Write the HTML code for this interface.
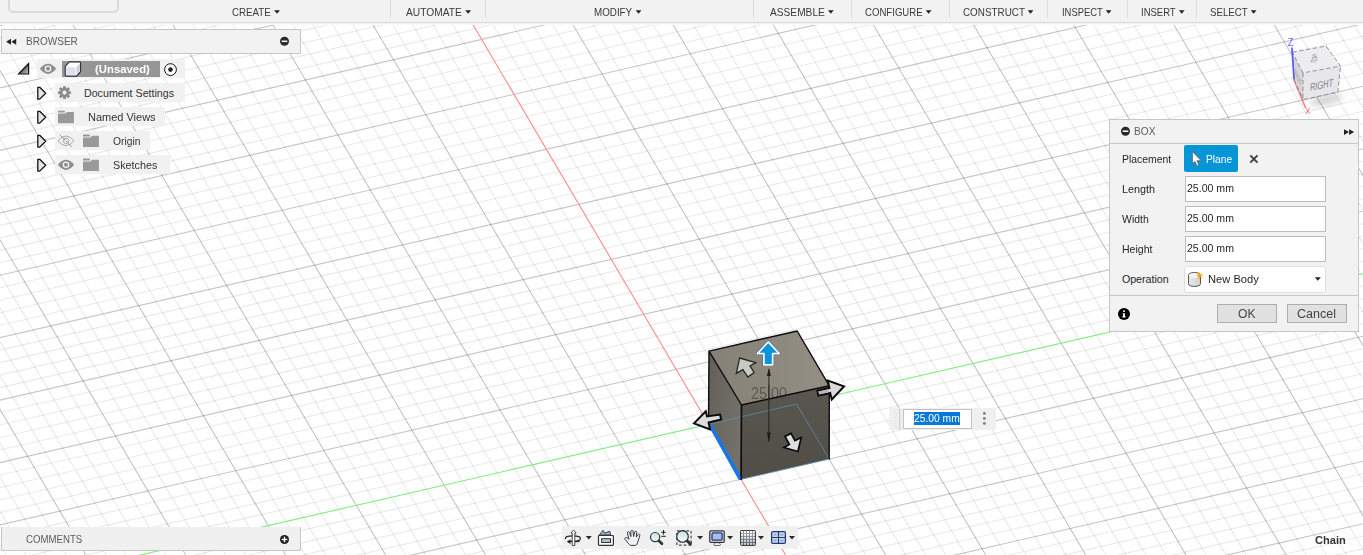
<!DOCTYPE html>
<html lang="en"><head><meta charset="utf-8"><title>Fusion - Box</title>
<style>
html,body{margin:0;padding:0}
body{width:1363px;height:555px;overflow:hidden;position:relative;background:#fff;font-family:"Liberation Sans",sans-serif}
.t{position:absolute;white-space:nowrap;line-height:1;transform-origin:0 0;display:block}
svg{position:absolute;overflow:visible}
#canvas{left:0;top:0}
.ov{left:0;top:0;pointer-events:none}
svg text{font-family:"Liberation Sans",sans-serif}
#toolbar{position:absolute;left:0;top:0;width:1363px;height:22px;background:#f2f2f2;border-bottom:1px solid #dcdcdc;box-shadow:0 1px 0 #f3f3f3,0 2px 0 #fafafa}
#tabbox{position:absolute;left:8px;top:-8.5px;width:107px;height:17px;border:2px solid #dadada;border-radius:5px}
.dd{position:absolute;width:0;height:0;border-left:2.9px solid transparent;border-right:2.9px solid transparent;border-top:3.4px solid #222}
.sep{position:absolute;top:0;width:1px;height:18px;background:#dedede}
.panel{position:absolute;box-sizing:border-box;background:#f2f2f2;border:1px solid #c6c6c6}
.row{position:absolute;background:#f1f1f1;height:19.3px}
#sel{position:absolute;left:62px;top:61px;width:98px;height:16px;background:#969696}
#dialog{position:absolute;left:1109px;top:119px;width:250px;height:213px;box-sizing:border-box;background:#f2f2f2;border:1px solid #c6c6c6}
.hr{position:absolute;left:0;width:248px;height:1px;background:#c8c8c8}
.inp{position:absolute;left:1185px;width:141px;height:26px;box-sizing:border-box;background:#fff;border:1px solid #bcbcbc}
.btn{position:absolute;top:304px;width:60px;height:19px;box-sizing:border-box;background:#e1e1e1;border:1px solid #adadad}
#plane{position:absolute;left:1184.2px;top:145.3px;width:54.2px;height:27.2px;background:#0696d7;border-radius:2px}
#ddl{position:absolute;left:1184px;top:265.5px;width:142px;height:27px;box-sizing:border-box;background:#fff;border:1px solid #e0e0e0;border-radius:3px}
#fin{position:absolute;left:889px;top:408px;width:107px;height:22px;background:#f0f0f0}
#fin .box{position:absolute;left:14px;top:1px;width:69px;height:20px;box-sizing:border-box;background:#fff;border:1px solid #c2c2c2}
#fin .hl{position:absolute;left:25px;top:4px;width:46px;height:13px;background:#0a78d7}
#nav{position:absolute;left:562px;top:526px;width:236px;height:23px;background:#f0f0f0}
</style></head><body>
<svg id="canvas" width="1363" height="555" viewBox="0 0 1363 555">
<g id="gridlines">
<path d="M-2.0 541.6L7.1 557.0M-2.0 507.7L27.1 557.0M-2.0 473.8L47.0 557.0M-2.0 440.0L67.0 557.0M-2.0 372.2L107.0 557.0M-2.0 338.3L126.9 557.0M-2.0 304.4L146.9 557.0M-2.0 270.5L166.9 557.0M-2.0 202.7L206.9 557.0M-2.0 168.8L226.9 557.0M-2.0 135.0L246.8 557.0M-2.0 101.1L266.8 557.0M-2.0 33.3L306.8 557.0M10.2 20.0L326.8 557.0M30.2 20.0L346.8 557.0M50.2 20.0L366.8 557.0M90.1 20.0L406.8 557.0M110.1 20.0L426.8 557.0M130.1 20.0L446.7 557.0M150.1 20.0L466.7 557.0M190.1 20.0L506.7 557.0M210.1 20.0L526.7 557.0M230.1 20.0L546.7 557.0M250.1 20.0L566.7 557.0M290.1 20.0L606.7 557.0M310.1 20.0L626.7 557.0M330.1 20.0L646.7 557.0M350.1 20.0L666.7 557.0M390.1 20.0L706.8 557.0M410.1 20.0L726.8 557.0M430.1 20.0L746.8 557.0M450.2 20.0L766.8 557.0M490.2 20.0L806.8 557.0M510.2 20.0L826.8 557.0M530.2 20.0L846.8 557.0M550.2 20.0L866.8 557.0M590.2 20.0L906.9 557.0M610.3 20.0L926.9 557.0M630.3 20.0L946.9 557.0M650.3 20.0L966.9 557.0M690.3 20.0L1006.9 557.0M710.3 20.0L1027.0 557.0M730.4 20.0L1047.0 557.0M750.4 20.0L1067.0 557.0M790.4 20.0L1107.1 557.0M810.5 20.0L1127.1 557.0M830.5 20.0L1147.1 557.0M850.5 20.0L1167.1 557.0M890.6 20.0L1207.2 557.0M910.6 20.0L1227.2 557.0M930.6 20.0L1247.2 557.0M950.7 20.0L1267.3 557.0M990.7 20.0L1307.3 557.0M1010.7 20.0L1327.4 557.0M1030.8 20.0L1347.4 557.0M1050.8 20.0L1365.0 552.9M1090.9 20.0L1365.0 484.9M1110.9 20.0L1365.0 450.9M1131.0 20.0L1365.0 416.9M1151.0 20.0L1365.0 382.9M1191.1 20.0L1365.0 315.0M1211.1 20.0L1365.0 281.0M1231.2 20.0L1365.0 247.0M1251.2 20.0L1365.0 213.0M1291.3 20.0L1365.0 145.0M1311.3 20.0L1365.0 111.0M1331.4 20.0L1365.0 77.0M1351.4 20.0L1365.0 43.0" stroke="#000" stroke-opacity="0.085" stroke-width="1.1" fill="none"/>
<path d="M-2.0 38.5L78.1 20.0M-2.0 51.0L132.3 20.0M-2.0 63.5L186.4 20.0M-2.0 76.0L240.6 20.0M-2.0 100.9L348.9 20.0M-2.0 113.4L403.0 20.0M-2.0 125.9L457.2 20.0M-2.0 138.4L511.4 20.0M-2.0 163.4L619.8 20.0M-2.0 175.8L674.0 20.0M-2.0 188.3L728.2 20.0M-2.0 200.8L782.4 20.0M-2.0 225.8L890.8 20.0M-2.0 238.3L945.1 20.0M-2.0 250.8L999.3 20.0M-2.0 263.2L1053.5 20.0M-2.0 288.2L1162.0 20.0M-2.0 300.7L1216.3 20.0M-2.0 313.2L1270.6 20.0M-2.0 325.7L1324.9 20.0M-2.0 350.6L1365.0 35.8M-2.0 363.1L1365.0 48.3M-2.0 375.6L1365.0 60.8M-2.0 388.1L1365.0 73.3M-2.0 413.0L1365.0 98.3M-2.0 425.5L1365.0 110.8M-2.0 438.0L1365.0 123.3M-2.0 450.5L1365.0 135.8M-2.0 475.4L1365.0 160.8M-2.0 487.9L1365.0 173.3M-2.0 500.4L1365.0 185.8M-2.0 512.9L1365.0 198.3M-2.0 537.8L1365.0 223.3M-2.0 550.3L1365.0 235.8M23.2 557.0L1365.0 248.3M77.5 557.0L1365.0 260.8M186.0 557.0L1365.0 285.8M240.3 557.0L1365.0 298.3M294.5 557.0L1365.0 310.8M348.8 557.0L1365.0 323.3M457.4 557.0L1365.0 348.3M511.7 557.0L1365.0 360.8M566.0 557.0L1365.0 373.3M620.3 557.0L1365.0 385.8M729.0 557.0L1365.0 410.8M783.3 557.0L1365.0 423.3M837.6 557.0L1365.0 435.8M892.0 557.0L1365.0 448.3M1000.7 557.0L1365.0 473.3M1055.1 557.0L1365.0 485.8M1109.4 557.0L1365.0 498.3M1163.8 557.0L1365.0 510.8M1272.6 557.0L1365.0 535.8M1327.0 557.0L1365.0 548.3" stroke="#000" stroke-opacity="0.085" stroke-width="1.1" fill="none"/>
<path d="M-2.0 406.1L87.0 557.0M-2.0 236.6L186.9 557.0M-2.0 67.2L286.8 557.0M70.1 20.0L386.8 557.0M170.1 20.0L486.7 557.0M270.1 20.0L586.7 557.0M370.1 20.0L686.7 557.0M570.2 20.0L886.8 557.0M670.3 20.0L986.9 557.0M770.4 20.0L1087.0 557.0M870.5 20.0L1187.2 557.0M970.7 20.0L1287.3 557.0M1070.9 20.0L1365.0 518.9M1171.0 20.0L1365.0 349.0M1271.3 20.0L1365.0 179.0" stroke="#000" stroke-opacity="0.225" stroke-width="1.15" fill="none"/>
<path d="M-2.0 26.0L24.0 20.0M-2.0 88.4L294.7 20.0M-2.0 150.9L565.6 20.0M-2.0 213.3L836.6 20.0M-2.0 275.7L1107.8 20.0M-2.0 338.1L1365.0 23.3M-2.0 400.6L1365.0 85.8M-2.0 463.0L1365.0 148.3M-2.0 525.4L1365.0 210.8M403.1 557.0L1365.0 335.8M674.6 557.0L1365.0 398.3M946.3 557.0L1365.0 460.8M1218.2 557.0L1365.0 523.3" stroke="#000" stroke-opacity="0.225" stroke-width="1.15" fill="none"/>
<path d="M470.2 20.0L786.8 557.0" stroke="#ff8a8a" stroke-width="1.1" fill="none"/>
<path d="M131.7 557.0L1365.0 273.3" stroke="#82ee82" stroke-width="1.15" fill="none"/>
</g>
<defs><linearGradient id="gleft" x1="0" y1="0" x2="1" y2="0.6"><stop offset="0" stop-color="#625f58"/><stop offset="0.6" stop-color="#6e6b64"/><stop offset="1" stop-color="#74716a"/></linearGradient><linearGradient id="gtop" x1="0" y1="0" x2="1" y2="0"><stop offset="0" stop-color="#868177"/><stop offset="1" stop-color="#938f85"/></linearGradient><linearGradient id="gfront" x1="0" y1="0" x2="0" y2="1"><stop offset="0" stop-color="#5a574f"/><stop offset="1" stop-color="#504d47"/></linearGradient></defs>
<polygon points="708.5,424.3 741.2,479.3 741.5,405.0 709.0,351.1" fill="url(#gleft)"/>
<polygon points="741.2,479.3 829.2,459.0 829.3,385.8 741.5,405.0" fill="url(#gfront)"/>
<polygon points="709.0,351.1 741.5,405.0 829.3,385.8 797.2,331.0" fill="url(#gtop)"/>
<text x="751" y="399.4" font-size="15.8" fill="#504d47" textLength="35.9" lengthAdjust="spacingAndGlyphs" opacity="0.8">25.00</text>
<path d="M708.5 424.3L796.6 404.0L829.2 459.0L741.2 479.3" fill="none" stroke="#5b93bd" stroke-width="1" opacity="0.7"/>
<path d="M708.5 424.3L709.0 351.1L797.2 331.0L829.3 385.8L829.2 459.0M709.0 351.1L741.5 405.0L829.3 385.8M741.5 405.0L741.2 479.3" fill="none" stroke="#0c0c0c" stroke-width="1.4" stroke-linejoin="round" stroke-linecap="round"/>
<path d="M710.4 425.6L740.6 479.5" stroke="#1677ea" stroke-width="3.6" stroke-linecap="butt"/>
<path d="M741.5 405.0L741.2 479.8" stroke="#0c0c0c" stroke-width="1.4"/>
<path d="M768.9 369V441.5" stroke="#1c1c1c" stroke-width="0.9"/><path d="M768.9 368.3L766.9 376H770.9ZM768.9 442L766.9 432.5H770.9Z" fill="#1c1c1c"/>
<path d="M768.9 385V402" stroke="#2a2a2a" stroke-width="0.9"/>
<polygon points="739.6,358 755.8,362.6 750,365.9 754.1,372.5 747.9,377.1 742.9,369.6 736.3,373.4" fill="#c9c8c4" stroke="#262626" stroke-width="1.3" stroke-linejoin="miter"/>
<polygon points="694,423.4 705.8,411.2 707,416.4 720,414.5 721.2,419.5 708.6,422.6 710,429.4" fill="#dcdcdc" stroke="#0a0a0a" stroke-width="2" stroke-linejoin="miter"/>
<polygon points="844,386.4 827.8,380.6 829.4,388 817.4,390.8 818.4,395.6 830.2,393 831.8,399.4" fill="#dadada" stroke="#0a0a0a" stroke-width="2" stroke-linejoin="miter"/>
<polygon points="818.4,391.6 828.4,389.3 828.4,392.4 819.1,394.5" fill="#b6b6b6"/>
<polygon points="797.9,451.5 801.2,437.6 794.9,440.6 791,433.4 785,436.4 789.4,444.5 784,447.6" fill="#dedede" stroke="#0a0a0a" stroke-width="1.7" stroke-linejoin="miter"/>
<polygon points="768.3,341.8 779.3,353.7 772.7,353.7 772.7,364.8 763.9,364.8 763.9,353.7 757.3,353.7" fill="#0a94dc" stroke="#2d4d85" stroke-width="2.5" stroke-linejoin="round"/>
<polygon points="768.3,341.8 779.3,353.7 772.7,353.7 772.7,364.8 763.9,364.8 763.9,353.7 757.3,353.7" fill="#0a94dc" stroke="#fff" stroke-width="1.7" stroke-linejoin="round"/>
<defs><filter id="blur" x="-50%" y="-50%" width="200%" height="200%"><feGaussianBlur stdDeviation="3.2"/></filter></defs>
<ellipse cx="1326" cy="100" rx="17" ry="5" fill="#000" opacity="0.17" filter="url(#blur)" transform="rotate(-12 1326 100)"/>
<path d="M1294.1 79.8L1305.6 108" stroke="#ee7777" stroke-width="1.8" opacity="0.85"/>
<polygon points="1292.3,52.2 1303.0,72.9 1303.0,99.7 1294.1,79.8" fill="#d2d2d4" opacity="0.92"/>
<polygon points="1303.0,72.9 1340.5,66.0 1337.9,92.0 1303.0,99.7" fill="#e6e6e8" opacity="0.94"/>
<polygon points="1292.3,52.2 1326.0,46.1 1340.5,66.0 1303.0,72.9" fill="#ececee" opacity="0.94"/>
<path d="M1292.3 52.2L1326.0 46.1L1340.5 66.0L1303.0 72.9ZM1303.0 72.9L1303.0 99.7L1337.9 92.0L1340.5 66.0M1292.3 52.2L1294.1 79.8L1303.0 99.7" fill="none" stroke="#707070" stroke-width="0.7" stroke-dasharray="4.5 2.4"/>
<path d="M1291.9 47.5L1294.1 79.8" stroke="#5a5aff" stroke-width="1.7"/>
<text x="1287.7" y="45.5" font-size="10" fill="#6262ff" textLength="5.5" lengthAdjust="spacingAndGlyphs">Z</text>
<text x="1305.2" y="113.9" font-size="9.6" fill="#f06a6a" textLength="5.2" lengthAdjust="spacingAndGlyphs">X</text>
<text transform="matrix(1 -0.2 0.05 1 1310.2 91)" font-size="10.8" fill="#82828e" font-style="italic" textLength="23" lengthAdjust="spacingAndGlyphs">RIGHT</text>
<text transform="matrix(0.28 -0.92 0.95 0.42 1315.6 64.6)" font-size="7.5" fill="#8d8d95" textLength="10" lengthAdjust="spacingAndGlyphs">TOP</text>
<text transform="matrix(0.2 0.42 0 1 1295 75)" font-size="10" fill="#8d8d95" textLength="30" lengthAdjust="spacingAndGlyphs">FRONT</text>
</svg>
<div id="toolbar"><div id="tabbox"></div>
<span class="t " style="left:231.80px;top:6.97px;font-size:10.67px;color:#3a3a3a;transform:scaleX(0.9132);">CREATE</span>
<span class="t " style="left:405.80px;top:6.97px;font-size:10.67px;color:#3a3a3a;transform:scaleX(0.9589);">AUTOMATE</span>
<span class="t " style="left:593.90px;top:6.97px;font-size:10.67px;color:#3a3a3a;transform:scaleX(0.9207);">MODIFY</span>
<span class="t " style="left:769.90px;top:6.97px;font-size:10.67px;color:#3a3a3a;transform:scaleX(0.9544);">ASSEMBLE</span>
<span class="t " style="left:864.90px;top:6.97px;font-size:10.67px;color:#3a3a3a;transform:scaleX(0.9013);">CONFIGURE</span>
<span class="t " style="left:962.90px;top:6.97px;font-size:10.67px;color:#3a3a3a;transform:scaleX(0.9257);">CONSTRUCT</span>
<span class="t " style="left:1061.70px;top:6.97px;font-size:10.67px;color:#3a3a3a;transform:scaleX(0.8844);">INSPECT</span>
<span class="t " style="left:1141.00px;top:6.97px;font-size:10.67px;color:#3a3a3a;transform:scaleX(0.8913);">INSERT</span>
<span class="t " style="left:1209.90px;top:6.97px;font-size:10.67px;color:#3a3a3a;transform:scaleX(0.9083);">SELECT</span>
<i class="sep" style="left:390.0px"></i>
<i class="sep" style="left:484.5px"></i>
<i class="sep" style="left:753.1px"></i>
<i class="sep" style="left:850.6px"></i>
<i class="sep" style="left:948.5px"></i>
<i class="sep" style="left:1047.3px"></i>
<i class="sep" style="left:1126.7px"></i>
<i class="sep" style="left:1195.5px"></i>
</div>
<svg class="ov" width="1363" height="555" viewBox="0 0 1363 555"><polygon points="274.20,10.20 279.90,10.20 277.05,13.70" fill="#222"/>
<polygon points="465.30,10.20 471.00,10.20 468.15,13.70" fill="#222"/>
<polygon points="635.70,10.20 641.40,10.20 638.55,13.70" fill="#222"/>
<polygon points="828.00,10.20 833.70,10.20 830.85,13.70" fill="#222"/>
<polygon points="925.80,10.20 931.50,10.20 928.65,13.70" fill="#222"/>
<polygon points="1027.70,10.20 1033.40,10.20 1030.55,13.70" fill="#222"/>
<polygon points="1105.80,10.20 1111.50,10.20 1108.65,13.70" fill="#222"/>
<polygon points="1178.90,10.20 1184.60,10.20 1181.75,13.70" fill="#222"/>
<polygon points="1250.80,10.20 1256.50,10.20 1253.65,13.70" fill="#222"/></svg>
<div id="browser">
<div class="panel" style="left:1px;top:29px;width:300px;height:25px"></div>
<div class="row" style="left:37px;top:59px;width:148px"></div>
<div class="row" style="left:55px;top:83px;width:130px"></div>
<div class="row" style="left:55px;top:107px;width:110px"></div>
<div class="row" style="left:55px;top:131px;width:95px"></div>
<div class="row" style="left:55px;top:155px;width:115px"></div>
<div id="sel"></div>
<svg class="ov" width="1363" height="555" viewBox="0 0 1363 555"><path d="M6.1 41.8L11 38.8V44.8ZM11.3 41.8L16.2 38.8V44.8Z" fill="#222"/>
<circle cx="284.50" cy="41.30" r="4.50" fill="#2a2a2a"/><rect x="281.70" y="40.55" width="5.6" height="1.5" fill="#fff"/>
<defs><linearGradient id="gtri" x1="0.2" y1="0.3" x2="1" y2="1"><stop offset="0" stop-color="#3a3a3a"/><stop offset="1" stop-color="#c8c8c8"/></linearGradient></defs>
<path d="M28.6 63.6V74H18.6Z" fill="url(#gtri)" stroke="#111" stroke-width="1.2" stroke-linejoin="miter"/>
<path d="M39.80 68.80Q48.00 58.60 56.20 68.80Q48.00 79.00 39.80 68.80Z" fill="#8f8f8f"/><circle cx="48.00" cy="68.80" r="2.65" fill="#8f8f8f" stroke="#f4f4f4" stroke-width="1.3"/>
<path d="M65.2 66.4L69.3 61.9H79.6Q80.6 61.9 80.6 62.9V71.6L76.4 76.1H66.2Q65.2 76.1 65.2 75.1Z" fill="#fff" stroke="#2a2f3a" stroke-width="1.1" stroke-linejoin="round"/>
<path d="M66.2 67.2H75.6V75.2H66.2Z" fill="#dfe1e8"/><path d="M76.6 66.8L79.8 63.4V71.3L76.6 74.8Z" fill="#c9cdd8"/>
<circle cx="170.5" cy="69.6" r="5.9" fill="#fff" stroke="#111" stroke-width="1"/><circle cx="170.5" cy="69.6" r="2.3" fill="#222"/>
<path d="M37.80 87.30H39.70L45.70 93.20L39.70 99.10H37.80Z" fill="#e3e5ea" stroke="#111" stroke-width="1.3" stroke-linejoin="round"/>
<path d="M37.80 111.30H39.70L45.70 117.20L39.70 123.10H37.80Z" fill="#e3e5ea" stroke="#111" stroke-width="1.3" stroke-linejoin="round"/>
<path d="M37.80 135.30H39.70L45.70 141.20L39.70 147.10H37.80Z" fill="#e3e5ea" stroke="#111" stroke-width="1.3" stroke-linejoin="round"/>
<path d="M37.80 159.30H39.70L45.70 165.20L39.70 171.10H37.80Z" fill="#e3e5ea" stroke="#111" stroke-width="1.3" stroke-linejoin="round"/>
<path d="M68.99 91.21L70.94 91.16L70.94 94.04L68.99 93.99L68.66 94.79L70.07 96.14L68.04 98.17L66.69 96.76L65.89 97.09L65.94 99.04L63.06 99.04L63.11 97.09L62.31 96.76L60.96 98.17L58.93 96.14L60.34 94.79L60.01 93.99L58.06 94.04L58.06 91.16L60.01 91.21L60.34 90.41L58.93 89.06L60.96 87.03L62.31 88.44L63.11 88.11L63.06 86.16L65.94 86.16L65.89 88.11L66.69 88.44L68.04 87.03L70.07 89.06L68.66 90.41ZM62.40 92.60a2.10 2.10 0 1 0 4.20 0a2.10 2.10 0 1 0 -4.20 0Z" fill="#8a8a8a" fill-rule="evenodd"/>
<path transform="translate(58.00 110.70)" d="M0 0H6.2L6.9 0.7V1.9H0ZM0 2.8H7.1L9.3 1.2H15.9V12.5H0Z" fill="#999"/>
<path d="M58.00 140.80Q66.00 131.20 74.00 140.80Q66.00 150.40 58.00 140.80Z" fill="none" stroke="#a2a2a2" stroke-width="0.9"/><circle cx="66.00" cy="140.80" r="2.7" fill="none" stroke="#a2a2a2" stroke-width="0.9"/><path d="M60.00 134.90L71.80 146.80" stroke="#8a8a8a" stroke-width="0.8"/>
<path transform="translate(83.00 134.60)" d="M0 0H6.2L6.9 0.7V1.9H0ZM0 2.8H7.1L9.3 1.2H15.9V12.5H0Z" fill="#999"/>
<path d="M57.80 164.80Q66.00 154.60 74.20 164.80Q66.00 175.00 57.80 164.80Z" fill="#8f8f8f"/><circle cx="66.00" cy="164.80" r="2.65" fill="#8f8f8f" stroke="#f4f4f4" stroke-width="1.3"/>
<path transform="translate(83.00 158.60)" d="M0 0H6.2L6.9 0.7V1.9H0ZM0 2.8H7.1L9.3 1.2H15.9V12.5H0Z" fill="#999"/></svg>
<span class="t " style="left:26.20px;top:35.97px;font-size:10.67px;color:#5c5c5c;transform:scaleX(0.9413);">BROWSER</span>
<span class="t " style="left:95.10px;top:63.69px;font-size:11.00px;color:#fff;font-weight:bold;transform:scaleX(1.0324);">(Unsaved)</span>
<span class="t " style="left:84.00px;top:87.97px;font-size:10.67px;color:#333;">Document Settings</span>
<span class="t " style="left:88.30px;top:111.97px;font-size:10.67px;color:#333;transform:scaleX(1.0316);">Named Views</span>
<span class="t " style="left:113.10px;top:135.97px;font-size:10.67px;color:#333;transform:scaleX(0.9662);">Origin</span>
<span class="t " style="left:113.10px;top:159.97px;font-size:10.67px;color:#333;transform:scaleX(1.0117);">Sketches</span>
</div>
<div id="dialog"><div class="hr" style="top:23px"></div><div class="hr" style="top:175px"></div></div>
<div id="plane"></div>
<div class="inp" style="top:176px"></div>
<div class="inp" style="top:206px"></div>
<div class="inp" style="top:236px"></div>
<div id="ddl"></div>
<div class="btn" style="left:1217px"></div>
<div class="btn" style="left:1287px"></div>
<svg class="ov" width="1363" height="555" viewBox="0 0 1363 555"><circle cx="1125.50" cy="131.20" r="4.50" fill="#2a2a2a"/><rect x="1122.70" y="130.45" width="5.6" height="1.5" fill="#fff"/>
<path d="M1344 129.2L1349 132L1344 134.9ZM1349.1 129.2L1354.1 132L1349.1 134.9Z" fill="#222"/>
<path d="M1192.4 151.6V163.6L1195 161.5L1197 166.2L1198.9 165.3L1197 160.7H1201.2Z" fill="#fff" stroke="#6a6a6a" stroke-width="0.9" stroke-linejoin="round"/>
<path d="M1250.3 155.3L1257.5 162.6M1257.5 155.3L1250.3 162.6" stroke="#3c3c3c" stroke-width="1.8" fill="none"/>
<defs><linearGradient id="gcyl" x1="0" y1="0" x2="1" y2="0"><stop offset="0" stop-color="#e9e9e9"/><stop offset="1" stop-color="#d2d2d2"/></linearGradient></defs>
<path d="M1188.5 275.5Q1188.5 272.6 1194.5 272.6Q1200.5 272.6 1200.5 275.5V283.6Q1200.5 286.4 1194.5 286.4Q1188.5 286.4 1188.5 283.6Z" fill="url(#gcyl)" stroke="#555" stroke-width="1"/>
<path d="M1189 275.6Q1189 273.2 1194.5 273.2Q1200 273.2 1200 275.6Q1200 278 1194.5 278Q1189 278 1189 275.6Z" fill="#f6f6f6"/>
<polygon points="1199.60,271.50 1200.17,274.21 1202.50,272.70 1200.99,275.03 1203.70,275.60 1200.99,276.17 1202.50,278.50 1200.17,276.99 1199.60,279.70 1199.03,276.99 1196.70,278.50 1198.21,276.17 1195.50,275.60 1198.21,275.03 1196.70,272.70 1199.03,274.21" fill="#ffa400"/>
<polygon points="1314.80,277.20 1320.80,277.20 1317.80,280.70" fill="#222"/>
<circle cx="1124" cy="313.9" r="6" fill="#000"/><rect x="1123.2" y="310.4" width="1.7" height="1.6" fill="#fff"/><path d="M1122.6 313.2H1124.9V316.3H1125.6V317.4H1122.4V316.3H1123.1V314.3H1122.6Z" fill="#fff"/></svg>
<span class="t " style="left:1134.30px;top:125.97px;font-size:10.67px;color:#5c5c5c;transform:scaleX(0.9541);">BOX</span>
<span class="t " style="left:1121.70px;top:153.97px;font-size:10.67px;color:#262626;transform:scaleX(0.9780);">Placement</span>
<span class="t " style="left:1121.70px;top:183.97px;font-size:10.67px;color:#262626;transform:scaleX(1.0113);">Length</span>
<span class="t " style="left:1121.70px;top:213.97px;font-size:10.67px;color:#262626;transform:scaleX(0.9826);">Width</span>
<span class="t " style="left:1121.90px;top:243.97px;font-size:10.67px;color:#262626;transform:scaleX(0.9889);">Height</span>
<span class="t " style="left:1121.90px;top:273.97px;font-size:10.67px;color:#262626;">Operation</span>
<span class="t " style="left:1187.40px;top:182.97px;font-size:10.67px;color:#262626;transform:scaleX(0.9908);">25.00 mm</span>
<span class="t " style="left:1187.40px;top:212.97px;font-size:10.67px;color:#262626;transform:scaleX(0.9908);">25.00 mm</span>
<span class="t " style="left:1187.40px;top:242.97px;font-size:10.67px;color:#262626;transform:scaleX(0.9908);">25.00 mm</span>
<span class="t " style="left:1206.10px;top:153.97px;font-size:10.67px;color:#fff;transform:scaleX(0.9564);">Plane</span>
<span class="t " style="left:1207.90px;top:273.97px;font-size:10.67px;color:#262626;transform:scaleX(1.0467);">New Body</span>
<span class="t " style="left:1237.80px;top:307.84px;font-size:12.00px;color:#444;transform:scaleX(1.0093);">OK</span>
<span class="t " style="left:1296.90px;top:307.84px;font-size:12.00px;color:#444;transform:scaleX(1.0441);">Cancel</span>
<div id="fin"><div class="box"></div><div class="hl"></div></div>
<div id="nav"></div>
<svg class="ov" width="1363" height="555" viewBox="0 0 1363 555"><defs><linearGradient id="glens" x1="0" y1="0" x2="0" y2="1"><stop offset="0" stop-color="#c9dfe2"/><stop offset="1" stop-color="#f6fbfb"/></linearGradient><linearGradient id="ggrid" x1="0" y1="0" x2="0" y2="1"><stop offset="0" stop-color="#a6a8ad"/><stop offset="1" stop-color="#565b66"/></linearGradient></defs>
<ellipse cx="572.9" cy="538.6" rx="7.6" ry="2.7" fill="none" stroke="#222" stroke-width="1.1"/>
<rect x="565" y="539" width="5" height="5" fill="#f0f0f0"/>
<path d="M566.9 541.6L570.4 539.4V544Z" fill="#111"/><path d="M569.5 541.6H579.5" stroke="#222" stroke-width="1.1"/>
<path d="M572.2 545.6V533H570.9L573.5 530.1L576.1 533H574.8V545.6Z" fill="#fff" stroke="#2f343c" stroke-width="0.9" stroke-linejoin="round"/>
<polygon points="585.80,536.00 591.80,536.00 588.80,539.60" fill="#2a2a2a"/>
<path d="M599.3 535L603.1 530.3L604.5 533.2L609.8 531.2L610.6 535Z" fill="#a9b0bb" stroke="#2f343c" stroke-width="0.9" stroke-linejoin="round"/>
<rect x="598.5" y="535.5" width="14.9" height="9.8" rx="0.8" fill="#fff" stroke="#2f343c" stroke-width="1.2"/>
<rect x="601.6" y="538.7" width="8.9" height="3.8" fill="#b9c0cb" stroke="#2f343c" stroke-width="1"/>
<path d="M624.5 538.7C625.5 536.9 627 537.2 628.2 538.7L629 539.4L627.4 533.2C627.1 531.4 629.2 531.1 629.6 532.7L630.9 536.6L630.8 531.5C630.9 530 633 530 633.1 531.5L633.6 536.5L634.6 532.1C635 530.7 636.9 531 636.7 532.6L636.3 537.1L637.9 534.7C638.7 533.5 640.3 534.3 639.8 535.7L637.8 541.8C637.3 543.6 636.6 545.4 635.5 545.4H630.8C629.5 545.4 627 541.6 624.5 538.7Z" fill="#eef1f6" stroke="#2f343c" stroke-width="0.95" stroke-linejoin="round"/>
<path d="M658.3 540.3L662 543.8" stroke="#2f343c" stroke-width="2.6" stroke-linecap="round"/>
<circle cx="655.1" cy="537.1" r="4.6" fill="url(#glens)" stroke="#2f343c" stroke-width="1.2"/>
<path d="M661.2 532.3H665.8M663.5 530V534.6M661.2 536.3H665.8" stroke="#222" stroke-width="1"/>
<rect x="676.9" y="530.9" width="14.2" height="14.2" fill="none" stroke="#222" stroke-width="1" stroke-dasharray="2.7 2.03"/>
<path d="M686.8 540.5L690.4 543.9" stroke="#2f343c" stroke-width="3" stroke-linecap="round"/>
<circle cx="682.5" cy="536.4" r="5.8" fill="url(#glens)" stroke="#222" stroke-width="1.15"/>
<polygon points="697.10,536.00 703.10,536.00 700.10,539.60" fill="#2a2a2a"/>
<rect x="713.8" y="543.6" width="6.6" height="1.9" rx="0.9" fill="#fff" stroke="#444" stroke-width="0.8"/><path d="M715.2 542.8H719.2V544H715.2Z" fill="#ddd"/>
<rect x="709.8" y="530.9" width="14.4" height="11.4" rx="1" fill="#eef1f6" stroke="#333" stroke-width="1.3"/>
<rect x="712" y="532.9" width="10.1" height="7.2" rx="0.9" fill="#a6bfe6" stroke="#1f3a7a" stroke-width="1.3"/>
<polygon points="727.10,536.00 733.10,536.00 730.10,539.60" fill="#2a2a2a"/>
<rect x="740.6" y="530.7" width="14.8" height="14.6" rx="1.2" fill="url(#ggrid)" stroke="#444" stroke-width="1.2"/>
<rect x="741.1" y="531.0" width="1.9" height="1.9" fill="#ffffff"/>
<rect x="744.1" y="531.0" width="1.9" height="1.9" fill="#ffffff"/>
<rect x="747.0" y="531.0" width="1.9" height="1.9" fill="#ffffff"/>
<rect x="750.0" y="531.0" width="1.9" height="1.9" fill="#ffffff"/>
<rect x="752.9" y="531.0" width="1.9" height="1.9" fill="#ffffff"/>
<rect x="741.1" y="533.9" width="1.9" height="1.9" fill="#ffffff"/>
<rect x="744.1" y="533.9" width="1.9" height="1.9" fill="#ffffff"/>
<rect x="747.0" y="533.9" width="1.9" height="1.9" fill="#ffffff"/>
<rect x="750.0" y="533.9" width="1.9" height="1.9" fill="#ffffff"/>
<rect x="752.9" y="533.9" width="1.9" height="1.9" fill="#ffffff"/>
<rect x="741.1" y="536.9" width="1.9" height="1.9" fill="#eef0f4"/>
<rect x="744.1" y="536.9" width="1.9" height="1.9" fill="#eef0f4"/>
<rect x="747.0" y="536.9" width="1.9" height="1.9" fill="#eef0f4"/>
<rect x="750.0" y="536.9" width="1.9" height="1.9" fill="#eef0f4"/>
<rect x="752.9" y="536.9" width="1.9" height="1.9" fill="#eef0f4"/>
<rect x="741.1" y="539.9" width="1.9" height="1.9" fill="#dde1ea"/>
<rect x="744.1" y="539.9" width="1.9" height="1.9" fill="#dde1ea"/>
<rect x="747.0" y="539.9" width="1.9" height="1.9" fill="#dde1ea"/>
<rect x="750.0" y="539.9" width="1.9" height="1.9" fill="#dde1ea"/>
<rect x="752.9" y="539.9" width="1.9" height="1.9" fill="#dde1ea"/>
<rect x="741.1" y="542.9" width="1.9" height="1.9" fill="#d3d8e4"/>
<rect x="744.1" y="542.9" width="1.9" height="1.9" fill="#d3d8e4"/>
<rect x="747.0" y="542.9" width="1.9" height="1.9" fill="#d3d8e4"/>
<rect x="750.0" y="542.9" width="1.9" height="1.9" fill="#d3d8e4"/>
<rect x="752.9" y="542.9" width="1.9" height="1.9" fill="#d3d8e4"/>
<polygon points="758.00,536.00 764.00,536.00 761.00,539.60" fill="#2a2a2a"/>
<rect x="771.6" y="531.7" width="13.8" height="11.6" rx="1.3" fill="#cbdaf1" stroke="#1f3a6e" stroke-width="1.25"/>
<path d="M778.5 531.7V543.3M771.6 537.5H785.4" stroke="#1f3a6e" stroke-width="1.2"/>
<rect x="773.5" y="533.7" width="3.1" height="1.9" fill="#8eaad8"/>
<rect x="780.4" y="533.7" width="3.1" height="1.9" fill="#8eaad8"/>
<rect x="773.5" y="539.5" width="3.1" height="1.9" fill="#8eaad8"/>
<rect x="780.4" y="539.5" width="3.1" height="1.9" fill="#8eaad8"/>
<polygon points="789.00,536.00 795.00,536.00 792.00,539.60" fill="#2a2a2a"/></svg>
<div class="panel" style="left:1px;top:527px;width:300px;height:24px;border-top:none;background:#f0f0f0"></div>
<svg class="ov" width="1363" height="555" viewBox="0 0 1363 555"><circle cx="284.50" cy="539.50" r="4.50" fill="#1e1e1e"/><rect x="281.70" y="538.80" width="5.6" height="1.4" fill="#fff"/><rect x="283.80" y="536.70" width="1.4" height="5.6" fill="#fff"/>
<rect x="894.4" y="410.5" width="1" height="1" fill="#d0d0d0"/>
<rect x="895.6" y="413.7" width="1" height="1" fill="#d0d0d0"/>
<rect x="894.4" y="416.9" width="1" height="1" fill="#d0d0d0"/>
<rect x="895.6" y="420.1" width="1" height="1" fill="#d0d0d0"/>
<rect x="894.4" y="423.3" width="1" height="1" fill="#d0d0d0"/>
<rect x="895.6" y="426.5" width="1" height="1" fill="#d0d0d0"/>
<rect x="898.9" y="408.6" width="1.4" height="21" fill="#d2d2d2"/>
<circle cx="984.4" cy="413.4" r="1.45" fill="#7e7e7e"/>
<circle cx="984.4" cy="418.4" r="1.45" fill="#7e7e7e"/>
<circle cx="984.4" cy="423.4" r="1.45" fill="#7e7e7e"/></svg>
<span class="t " style="left:26.30px;top:533.97px;font-size:10.67px;color:#5c5c5c;transform:scaleX(0.9046);">COMMENTS</span>
<span class="t " style="left:1315.00px;top:534.69px;font-size:11.00px;color:#333;font-weight:bold;transform:scaleX(1.0080);">Chain</span>
<span class="t " style="left:914.20px;top:412.97px;font-size:10.67px;color:#fff;transform:scaleX(0.9655);">25.00 mm</span>
</body></html>
